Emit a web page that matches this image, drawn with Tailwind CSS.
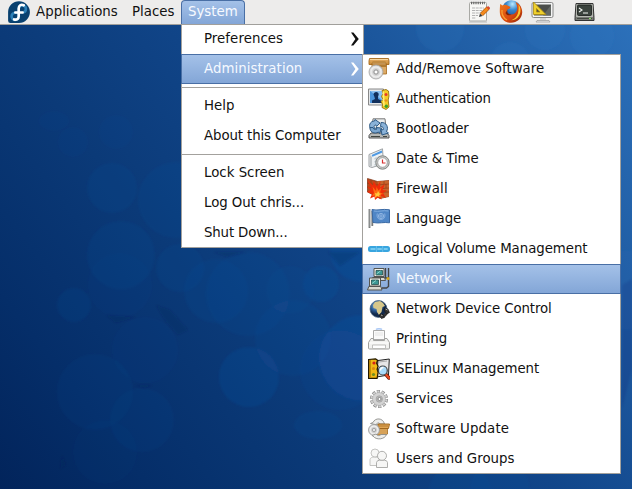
<!DOCTYPE html>
<html lang="en">
<head>
<meta charset="utf-8">
<title>Desktop</title>
<script src="https://cdn.jsdelivr.net/npm/@tailwindcss/browser@4"></script>
</head>
<body class="relative h-[489px] w-[632px] overflow-hidden bg-[#0c3c7c] text-[13.33px] leading-[16px] text-[#111] font-['DejaVu_Sans',sans-serif]">

<!-- wallpaper -->
<svg class="absolute inset-0" width="632" height="489" viewBox="0 0 632 489">
  <defs>
    <linearGradient id="wall" gradientUnits="userSpaceOnUse" x1="0" y1="489" x2="632" y2="0">
      <stop offset="0" stop-color="#02245b"/><stop offset=".15" stop-color="#052e69"/><stop offset=".35" stop-color="#0b3a78"/><stop offset=".55" stop-color="#11468a"/><stop offset=".8" stop-color="#215fa6"/><stop offset="1" stop-color="#2d72bc"/>
    </linearGradient>
    <filter id="soft"><feGaussianBlur stdDeviation=".8"/></filter>
  </defs>
  <rect width="632" height="489" fill="url(#wall)"/>
  <g filter="url(#soft)" fill="#1553a6" fill-opacity=".13">
    <circle cx="112" cy="188" r="25"/><circle cx="121" cy="255" r="34"/><circle cx="74" cy="305" r="17"/>
    <circle cx="73" cy="142" r="15" fill-opacity=".06"/><ellipse cx="54" cy="121" rx="15" ry="10" fill-opacity=".06"/><circle cx="116" cy="132" r="17" fill-opacity=".06"/>
    <circle cx="176" cy="200" r="38"/><circle cx="180" cy="268" r="24"/><circle cx="216" cy="291" r="32"/>
    <circle cx="248" cy="294" r="42"/><circle cx="321" cy="284" r="18" fill-opacity=".2"/><circle cx="290" cy="290" r="24" fill-opacity=".08"/>
    <circle cx="249" cy="377" r="30" fill-opacity=".22"/>
    <circle cx="293" cy="338" r="38"/><circle cx="362" cy="250" r="32" fill-opacity=".25"/><circle cx="362" cy="358" r="43" fill-opacity=".25"/>
    <ellipse cx="318" cy="425" rx="24" ry="14"/><circle cx="145" cy="350" r="33" fill-opacity=".06"/><circle cx="120" cy="285" r="32" fill-opacity=".06"/>
    <circle cx="95" cy="392" r="38" fill-opacity=".08"/><circle cx="142" cy="420" r="32" fill-opacity=".08"/>
    <circle cx="105" cy="452" r="32" fill-opacity=".05"/><circle cx="340" cy="370" r="40" fill-opacity=".1"/><circle cx="500" cy="490" r="30"/><circle cx="460" cy="495" r="32"/>
  </g>
  <g filter="url(#soft)" fill="#2f7bcb" fill-opacity=".13">
    <circle cx="440" cy="28" r="24"/><circle cx="510" cy="62" r="20"/><circle cx="545" cy="30" r="20"/><circle cx="592" cy="36" r="22"/><circle cx="626" cy="290" r="40" fill-opacity=".08"/>
  </g>
  <g filter="url(#soft)" fill="#032252" fill-opacity=".22">
    <path d="M156 305l14 5 18 20-10 5-14-16zM106 315l30 2-20 6zM133 385h20l-8 3zM62 455l4 10-6 4zM213 252h34l-20 5zM328 252h32l-20 14z"/>
    <path d="M622 285l10-6v90l-10 40z" fill-opacity=".12"/>
  </g>
</svg>

<!-- panel -->
<header class="relative flex h-[25px] border-b border-[#a19f9b] bg-[#edeceb]">
  <svg class="ml-2 mt-px h-[22px] w-[22px]" viewBox="0 0 22 22">
    <path d="M11 .2A10.9 10.9 0 0 0 .1 11v8.5A2.4 2.4 0 0 0 2.5 22H11A10.9 10.9 0 0 0 11 .2z" fill="#08406f"/>
    <path d="M10.800 11.800H7a3.600 3.600 0 1 0 3.800 3.600V7.200a3.600 3.600 0 1 1 3.800 4.400" fill="none" stroke="#3c9bd6" stroke-width="2.600" opacity=".7"/>
    <path d="M15.800 4.300C13 3 10.700 4.400 10.700 7.600V15.300C10.700 18 8.600 19.200 6.100 18.400M7.300 11.500H14.600" fill="none" stroke="#fff" stroke-width="2.600" stroke-linecap="round"/>
  </svg>
  <span class="ml-1.5 w-[96px] pt-1 tracking-[0.03px]">Applications</span>
  <span class="w-[49px] pt-1">Places</span>
  <span class="h-[24px] w-[64px] rounded-t-[4px] border border-b-0 border-[#496fa5] bg-linear-to-b from-[#a4c1e8] to-[#83a6d7] pl-1.5 pt-[3px] text-[#f7faff]">System</span>
  <div class="ml-[223px] flex">
    <svg class="h-6 w-[22px]" viewBox="0 0 22 24">
      <rect x="1.500" y="2.500" width="17" height="18.500" rx="1" fill="#f8f8f6" stroke="#a9a9a5"/>
      <path d="M1 22h18" stroke="#bbb" stroke-width="1"/>
      <path d="M3 3h14" stroke="#666" stroke-width="2.600" stroke-dasharray="1.200 1"/>
      <path d="M4 8h12M4 10.500h10M4 13h9M4 15.500h6M4 18h4" stroke="#b3b3b3" stroke-dasharray="3 .7"/>
      <path d="M13.500 14.500L20 8" stroke="#a85a14" stroke-width="4"/><path d="M13.500 14.500L20 8" stroke="#f58a1d" stroke-width="3"/>
      <path d="M19.300 6.700l2.200 2.200" stroke="#d9472f" stroke-width="2.200"/><path d="M11 17l1-3.500L14.500 16z" fill="#333"/>
    </svg>
    <svg class="ml-[9px] h-6 w-6" viewBox="0 0 24 24">
      <defs><radialGradient id="ffg" cx=".55" cy=".2" r=".9"><stop offset="0" stop-color="#b9eaff"/><stop offset=".35" stop-color="#3989cf"/><stop offset="1" stop-color="#0d2d70"/></radialGradient>
      <linearGradient id="ffo" x1="0" y1="0" x2="1" y2="1"><stop offset="0" stop-color="#f37c1a"/><stop offset=".6" stop-color="#d8480f"/><stop offset="1" stop-color="#8c2207"/></linearGradient></defs>
      <circle cx="12.500" cy="9.800" r="9.600" fill="url(#ffg)"/>
      <path d="M1.200 4c1 .5 1.600 1 2 1.600C5 4.500 7 4.600 8.500 5.600l3 1.400c-.4 1.500-1.500 2-3.200 2.600-1.500 3 1 5.400 4.200 5 2.500-.3 4-1.500 5-3.400C19 8.500 18 5 16.500 2c4.500 2 6.900 6 6.700 10.500C22.800 18.500 18 22.800 12 22.800 5.500 22.800.8 18 .8 12c0-3 .1-5 .4-8z" fill="url(#ffo)"/>
      <path d="M19.500 4.500c2.500 3 2.500 8 .7 11-2 3.500-5 4.800-8.200 4.800 5-1.500 8.500-6 7.500-15.800z" fill="#fbc531"/>
      <path d="M3 10c-.5 4 1.500 8 5 10" fill="none" stroke="#f8a034" stroke-width="1.300"/>
      <path d="M8.500 9.500c-1 3 1 5 4 5-2 1.500-5 1-6-1.500z" fill="#7f2409"/>
    </svg>
    <svg class="ml-[8px] h-6 w-[23px]" viewBox="0 0 23 24">
      <rect x="1" y="2.500" width="21" height="15" rx="1.500" fill="#f4f4f4" stroke="#888"/><rect x="3" y="4.500" width="17" height="11" fill="#4b4e4b"/>
      <path d="M12 15.500L20 5v10.500z" fill="#656965"/>
      <path d="M2.500 2v12.500H15zM5.500 8.500l3.500 3.500H5.500z" fill="#efd02e" fill-rule="evenodd" stroke="#a98a10" stroke-width=".8"/>
      <path d="M9 18h6v2.500H9z" fill="#d5d5d5"/><path d="M6 20.500h12l1 1.500H5z" fill="#eee" stroke="#999" stroke-width=".7"/>
    </svg>
    <svg class="ml-[20px] h-6 w-[21px]" viewBox="0 0 21 24">
      <path d="M2 3.500h17l1 14v3H1v-3z" fill="#777a74" stroke="#333" stroke-linejoin="round"/>
      <path d="M2.300 4.300h16.400L19 17H2z" fill="#b4b7b0"/><rect x="3.500" y="5" width="14" height="10.500" rx="1" fill="#3b433d" stroke="#171b18" stroke-width=".8"/>
      <path d="M5 8l3 2-3 2M9 13h5" fill="none" stroke="#f2f5f1" stroke-width="1.100"/>
      <path d="M3 18.500h15" stroke="#444842"/><path d="M15 18.500h2" stroke="#86e060"/>
    </svg>
  </div>
</header>

<!-- system menu -->
<nav class="absolute left-[181px] top-[25px] flex h-[223px] w-[183px] flex-col border border-t-0 border-[#a3a19d] bg-white">
  <div class="flex h-[29px] items-center justify-between pb-px pl-[22px] pr-1"><span class="tracking-[0.06px]">Preferences</span>
    <svg class="h-3.5 w-2" viewBox="0 0 8 14"><path d="M0 .5h2.400L7.800 7l-5.400 6.500H0L4.400 7z" fill="#111"/></svg></div>
  <div class="-ml-px flex h-[30px] items-center justify-between border border-r-0 border-[#496fa5] bg-linear-to-b from-[#a4c1e8] to-[#83a6d7] pl-[22px] pr-1 text-[#f5f9ff]"><span class="tracking-[0.06px]">Administration</span>
    <svg class="h-3.5 w-2" viewBox="0 0 8 14"><path d="M0 .5h2.400L7.800 7l-5.400 6.500H0L4.400 7z" fill="#fff"/></svg></div>
  <div class="my-[3px] h-px shrink-0 bg-[#a3a19d]"></div>
  <div class="flex h-[30px] items-center pl-[22px]">Help</div>
  <div class="flex h-[30px] items-center pl-[22px] tracking-[-0.1px]">About this Computer</div>
  <div class="my-[3px] h-px shrink-0 bg-[#a3a19d]"></div>
  <div class="flex h-[30px] items-center pl-[22px]">Lock Screen</div>
  <div class="flex h-[30px] items-center pl-[22px] tracking-[-0.06px]">Log Out chris...</div>
  <div class="flex h-[29px] items-center pl-[22px] pt-px tracking-[-0.15px]">Shut Down...</div>
</nav>

<!-- administration submenu -->
<nav class="absolute left-[362px] top-[54px] h-[420px] w-[259px] bg-white outline-1 -outline-offset-1 outline-[#a3a19d]">
  <div class="flex h-[30px] items-center gap-1.5 pl-1.5">
    <svg class="h-[22px] w-[22px]" viewBox="0 0 22 22">
      <defs><linearGradient id="box" x1="0" y1="0" x2="0" y2="1"><stop offset="0" stop-color="#e9b269"/><stop offset="1" stop-color="#c98a35"/></linearGradient>
      <radialGradient id="disc"><stop offset="0" stop-color="#fff"/><stop offset=".3" stop-color="#bbb"/><stop offset=".7" stop-color="#f0f0f0"/><stop offset="1" stop-color="#cfcfcf"/></radialGradient></defs>
      <path d="M4 6h14.500v10H4z" fill="#dca964" stroke="#a5691c" stroke-width=".8"/><path d="M5 7h13v2H5z" fill="#b17b32"/>
      <path d="M1.500 .5h19L21 3v3.500h-3V5H4v1.500H1V3z" fill="url(#box)" stroke="#a5691c" stroke-width=".9"/><path d="M4.500 3h13v2.500h-13z" fill="#c28c42"/><path d="M2 1.500h18" stroke="#f8d8a0"/>
      <circle cx="8" cy="14" r="7" fill="url(#disc)" stroke="#a5a5a5" stroke-width=".8"/><circle cx="8" cy="14" r="2" fill="#fff" stroke="#888" stroke-width=".8"/>
    </svg><span class="tracking-[0.05px]">Add/Remove Software</span></div>
  <div class="flex h-[30px] items-center gap-1.5 pl-1.5">
    <svg class="h-[22px] w-[22px]" viewBox="0 0 22 22">
      <path d="M.5 1h15v16H.5z" fill="#e4e7e9" stroke="#888"/><path d="M2 3h12v12H2z" fill="#4b95dc"/><path d="M2 3l12 9V3z" fill="#89bff0"/>
      <path d="M4 15v-2.500l3-1.500-.5-2-1-2.500C5.500 3 11 3 10.700 6.500L10 9v2l3 1.500V15z" fill="#102f5c"/>
      <path d="M14 2.500l4-1 2.500 1.500.5 5-.8 4 .8 7-3 2.500-4-2 .5-3-1.500-3 2-2-1.500-3 1.500-3z" fill="#f5cb25" stroke="#896400" stroke-width=".8"/><path d="M15.300 3.500L16 18" stroke="#ffef79" stroke-width="1.500"/>
      <circle cx="18" cy="6.500" r="1.500" fill="#e63c28"/><circle cx="17.800" cy="12.500" r="1.300" fill="#e9911b"/><circle cx="18.300" cy="18.300" r="1.700" fill="#3b9f26"/>
    </svg><span class="tracking-[-0.22px]">Authentication</span></div>
  <div class="flex h-[30px] items-center gap-1.5 pl-1.5">
    <svg class="h-[22px] w-[22px]" viewBox="0 0 22 22">
      <path d="M5 .8h12l1.500 13H3.500z" fill="#e9ebec" stroke="#777"/><path d="M3 15h16l2 2.500V20H1v-2.500z" fill="#b5b7b5" stroke="#555"/><path d="M3 18.500h9M15 18.500h4" stroke="#414641"/>
      <path d="M3 11.500C0 8 2 3 6.500 3L7 1.500 12 5 8.500 8.500 8 7C5.500 7 5.500 9.500 7.500 10.500z" fill="#8ab2d8" stroke="#24507c" stroke-width=".9"/>
      <path d="M2 9.500c-.5 4.500 4.500 7 8.500 4.500l1 1.500 2-5.500-5.500-.5 1 1.500c-2 1-3.500.5-4-1.500z" fill="#7ba6cf" stroke="#24507c" stroke-width=".9"/>
      <path d="M13 4.500c5.500-.5 8 5 5.500 9l2 1.500-6.500 2-1-6 2 1c1-2 0-3.500-2.500-3.500z" fill="#8ab2d8" stroke="#24507c" stroke-width=".9"/>
    </svg><span>Bootloader</span></div>
  <div class="flex h-[30px] items-center gap-1.5 pl-1.5">
    <svg class="h-[22px] w-[22px]" viewBox="0 0 22 22">
      <path d="M1 6.500L14.500.8l1 15L4 19.500l-3-1z" fill="#eef1f2" stroke="#9da1a4"/><path d="M4 7.800l10-4.300" stroke="#4d99e3" stroke-width="2"/><path d="M2 7v11l2 .5V9" fill="#bfc4c6"/>
      <path d="M6 11l8-3M6 14l8-3M6 17l7-2M8 9v9M11 8v9" stroke="#b8c4cd" stroke-width=".7"/>
      <circle cx="14.500" cy="14.500" r="6.700" fill="#c9cbc9" stroke="#828582"/><circle cx="14.500" cy="14.500" r="4.800" fill="#fff" stroke="#888" stroke-width=".7"/>
      <path d="M14.500 11.500v3.500h3" fill="none" stroke="#d83030" stroke-width="1.200"/>
    </svg><span class="tracking-[-0.06px]">Date &amp; Time</span></div>
  <div class="flex h-[30px] items-center gap-1.5 pl-1.5">
    <svg class="-ml-px mr-px h-[22px] w-[22px]" viewBox="0 0 22 22">
      <path d="M.5 .5l10 3L22 2.500v16l-9 2L.5 14z" fill="#b84b1c" stroke="#783014" stroke-width=".7"/><path d="M10.500 3.500L22 2.500v16l-9 2z" fill="#c9662c"/>
      <path d="M0 5l10 2 12-1M0 9l10 2 12-1M16 14h6M4 2v3M7 6v4M17 3v3M19 6v4" fill="none" stroke="#8b3614" stroke-width=".6"/>
      <path d="M0 1.500l6 6L6.500 3l3.500 5.500L13.500 3l-.5 6.500L18 6l-2.500 6 4.500.5-4 2.500 3 5-5-2 .5 3.500-3.500-2-3 2.500-.5-3.500-4.500 2 2-4.500L0 14l3.500-2L0 8.500l4 1z" fill="#ee2d0a"/>
      <path d="M5.500 8.500l3.500 4.500.5-4 2 3.500 3-3-1.500 5 3.500 1.500-3 .5.500 3-3-1.500-3 2.500v-3l-3 .5 2-3z" fill="#ff6a12"/><path d="M8 15l2 .5L11 13l1.500 2.500 1.500.5-2 1 .5 2-2.500-1-2 1.500.5-2.500z" fill="#ffc93d"/>
    </svg><span class="tracking-[0.2px]">Firewall</span></div>
  <div class="flex h-[30px] items-center gap-1.5 pl-1.5">
    <svg class="h-[22px] w-[22px]" viewBox="0 0 22 22">
      <path d="M1.500 1v19M4.300 3v15" stroke="#777b7b" stroke-width="1.800"/><path d="M1 1v18" stroke="#bbb" stroke-width=".6"/>
      <path d="M4 1.500c5.500 1.500 10-1 17.500.3v13c-6-1-10 1-16.500-.3z" fill="#4f86c6" stroke="#3a69a4"/><path d="M6 3c5 1 9-1 14.500 0" fill="none" stroke="#81aee0"/>
      <circle cx="13" cy="8" r="2.600" fill="none" stroke="#9dbfe8" stroke-width=".8"/><path d="M10.500 8h5M13 5.500v5M9.300 5.500c-1 4 1.300 6 3.700 6s4.700-2 3.700-6" fill="none" stroke="#9dbfe8" stroke-width=".7"/>
    </svg><span class="tracking-[-0.08px]">Language</span></div>
  <div class="flex h-[30px] items-center gap-1.5 pl-1.5">
    <svg class="h-[22px] w-[22px]" viewBox="0 0 22 22">
      <rect y="8" width="22" height="6" rx="2.500" fill="#38a5df"/><path d="M2.500 11h5M9.300 11h4.500M15.700 11h4" stroke="#8ad6f6" stroke-width="1.700"/><path d="M8.400 8v6M14.700 8v6" stroke="#79c9ef" stroke-width=".7"/>
    </svg><span class="tracking-[-0.04px]">Logical Volume Management</span></div>
  <div class="relative flex h-[30px] items-center gap-1.5 border border-[#496fa5] bg-linear-to-b from-[#a4c1e8] to-[#83a6d7] pl-[5px] text-[#f5f9ff]">
    <svg class="-ml-px h-6 w-[23px]" viewBox="0 0 23 24">
      <path d="M18.500 1v10M21.500 1v18.500l-2 1.500H15M17 11h4" fill="none" stroke="#444" stroke-width="1.400"/><circle cx="21" cy="11.500" r="1.500" fill="#d6a81e"/>
      <path d="M7 1.500h10v8H7z" fill="#efefe7" stroke="#555551"/><path d="M9 3.500h6.500V8H9z" fill="#3c9793" stroke="#18413f" stroke-width=".7"/><path d="M9.500 7l4-3" stroke="#8ed4cc"/><path d="M5.500 10.500h12l1 3h-14z" fill="#d9d9d0" stroke="#555551"/>
      <path d="M2.500 11h11v8h-11z" fill="#efefe7" stroke="#555551"/><path d="M4.500 13h7v4.500h-7z" fill="#3c9793" stroke="#18413f" stroke-width=".7"/><path d="M5 16.500l4-3" stroke="#8ed4cc"/><path d="M1.800 19.500h12l1.200 3.500H.5z" fill="#d9d9d0" stroke="#555551"/>
    </svg><span>Network</span></div>
  <div class="flex h-[30px] items-center gap-1.5 pl-1.5">
    <svg class="h-[22px] w-[22px]" viewBox="0 0 22 22">
      <defs><radialGradient id="globe" cx=".35" cy=".3"><stop offset="0" stop-color="#8dbfe9"/><stop offset=".6" stop-color="#2c5c97"/><stop offset="1" stop-color="#132a4c"/></radialGradient></defs>
      <circle cx="10.500" cy="11" r="8.500" fill="url(#globe)" stroke="#4a6480" stroke-width=".7"/>
      <path d="M7 4l5-1 3 2 2 3-2.500 1-1 5-2.500 3-2-3-.5-3-3-1-.5-3z" fill="#d7c78a"/>
      <path d="M13 19c3 0 5.500-3 6-6.500" stroke="#333" stroke-width="3" fill="none"/><path d="M16.500 10l3.500 1 1.500 3.500-2.500 1.500-2.500-3zM12 16l3 .5 1.500 3-3 1-2-2z" fill="#333" stroke="#111" stroke-width=".5"/><path d="M17.500 11l2 1M13 17l1.500.5" stroke="#aaa"/>
    </svg><span class="tracking-[-0.1px]">Network Device Control</span></div>
  <div class="flex h-[30px] items-center gap-1.5 pl-1.5">
    <svg class="h-[22px] w-[22px]" viewBox="0 0 22 22">
      <path d="M8 1.500c1-1 5-1 6 0" fill="none" stroke="#aac8f5" stroke-width="1.500"/>
      <path d="M5.500 2.500h11v9h-11z" fill="#fafafa" stroke="#a9a9a9"/><path d="M7 5h8M7 7h8" stroke="#e4e4e4"/>
      <path d="M3 10.500h2.500v2h11v-2H19l2.500 4v5.500a1 1 0 0 1-1 1H1.500a1 1 0 0 1-1-1v-5.500z" fill="#f1f1ef" stroke="#a0a09e"/><path d="M4.500 17h13v3.500h-13z" fill="#fff" stroke="#b2b2b0" stroke-width=".8"/><path d="M2 15h18" stroke="#fff"/>
    </svg><span>Printing</span></div>
  <div class="flex h-[30px] items-center gap-1.5 pl-1.5">
    <svg class="h-[22px] w-[22px]" viewBox="0 0 22 22">
      <path d="M10 2.500L21.300 1l-.8 16-12 2z" fill="#e7e7e7" stroke="#222"/><path d="M11 4l8-1" stroke="#aaa"/>
      <path d="M.6 1.500l7-.7 2 1.500-1 3 1.500 3-1 3 1 3-1 6H.6z" fill="#f0b816" stroke="#221800" stroke-width="1.200"/><path d="M2 2v17" stroke="#aa7400" stroke-width="1.300"/>
      <circle cx="6" cy="5" r="1.600" fill="#d32318"/><circle cx="5.500" cy="10.500" r="1.500" fill="#d98612"/><circle cx="5.500" cy="16.500" r="1.600" fill="#6f8f20"/>
      <path d="M18 16.500l3 3.500" stroke="#6b1606" stroke-width="3.500" stroke-linecap="round"/><path d="M18 16.500l3 3.500" stroke="#ee4c20" stroke-width="2" stroke-linecap="round"/>
      <circle cx="14.800" cy="12.500" r="4.500" fill="#a8dafa" stroke="#444" stroke-width="1.200"/><path d="M12.500 12.500c0-2 1-3 3-3" fill="none" stroke="#fff" stroke-width="1.300"/>
    </svg><span class="tracking-[-0.1px]">SELinux Management</span></div>
  <div class="flex h-[30px] items-center gap-1.5 pl-1.5">
    <svg class="h-[22px] w-[22px]" viewBox="0 0 22 22">
      <circle cx="11" cy="11" r="7.500" fill="none" stroke="#8a8a8a" stroke-width="3.200" stroke-dasharray="3.100 1.612"/><circle cx="11" cy="11" r="7.300" fill="none" stroke="#d2d2d2" stroke-width="2.200" stroke-dasharray="2.100 2.487" stroke-dashoffset="-.4"/>
      <circle cx="11" cy="11" r="6.500" fill="#d3d3d3" stroke="#a8a8a8" stroke-width=".6"/><circle cx="11.300" cy="11" r="3.200" fill="#b9b9b9" stroke="#9a9a9a" stroke-width=".6"/><circle cx="11.500" cy="11" r="1.500" fill="#fff" stroke="#777" stroke-width=".8"/>
    </svg><span class="tracking-[0.1px]">Services</span></div>
  <div class="flex h-[30px] items-center gap-1.5 pl-1.5">
    <svg class="h-[22px] w-[22px]" viewBox="0 0 22 22">
      <path d="M9 9h10.500v7l-2 1H9z" fill="#d7a258" stroke="#a26b20" stroke-width=".8"/>
      <path d="M2.500 5.500l2.500-1C7-.5 15-.5 16.500 6H12c-1-1.500-2.500-1.500-3.500 0l1 1z" fill="#ededeb" stroke="#8d8d8a" stroke-width=".9"/>
      <path d="M10 6h11.500l-1 4.500H10z" fill="#e1a654" stroke="#9a6015" stroke-width=".9"/><path d="M11 8h9" stroke="#b47a2e"/>
      <circle cx="6" cy="12" r="5.500" fill="url(#disc)" stroke="#999" stroke-width=".8"/><circle cx="6" cy="12" r="1.500" fill="#fff" stroke="#888" stroke-width=".7"/>
      <path d="M18.500 16.500C17 21.500 8 22.500 5 18l-1-.5 4-1.500c1.500 2 3.500 2 5 .5z" fill="#ededeb" stroke="#8d8d8a" stroke-width=".9"/>
    </svg><span class="tracking-[0.12px]">Software Update</span></div>
  <div class="flex h-[30px] items-center gap-1.5 pl-1.5">
    <svg class="h-[22px] w-[22px]" viewBox="0 0 22 22">
      <g fill="#f6f6f5" stroke="#bdbdbb" stroke-width=".9"><path d="M2 17.500v-6c0-1.500 2-2.500 4.500-2.500s4.500 1 4.500 2.500v6z"/><circle cx="7" cy="5" r="4"/>
      <path d="M8.500 19.500v-5c0-1.500 2-2.500 5.500-2.500s5.500 1 5.500 2.500v5z" stroke="#a5a5a3"/><circle cx="14" cy="7.800" r="4.500" stroke="#a5a5a3"/></g>
    </svg><span>Users and Groups</span></div>
</nav>
</body>
</html>
